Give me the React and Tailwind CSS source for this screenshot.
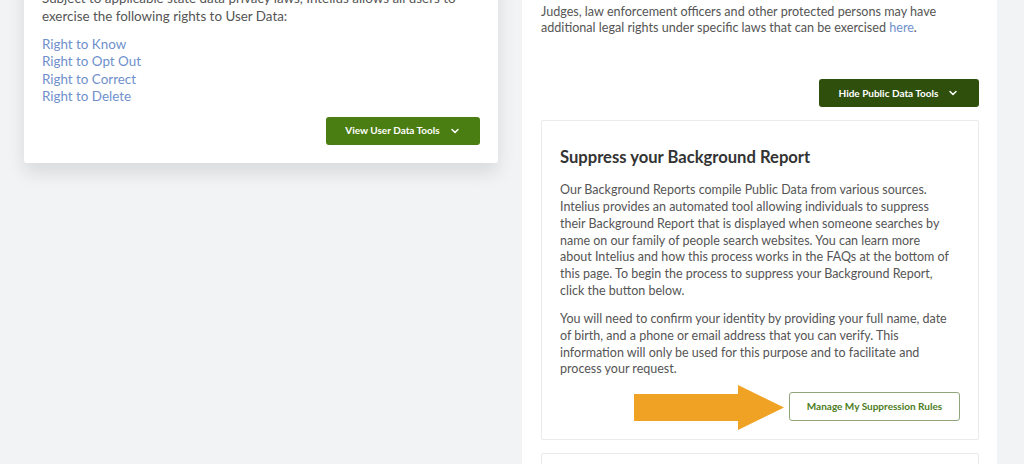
import { ChevronDown } from "lucide-react";

const font = { fontFamily: "Lato, 'Open Sans', sans-serif" };

const Lines = ({ lines }) =>
  lines.map((l, i) => (
    <span key={i} className="block whitespace-nowrap">
      {l}
    </span>
  ));

const App = () => {
  return (
    <div
      className="h-[464px] w-[1024px] overflow-hidden bg-[#f1f3f5] flex items-start text-[#555]"
      style={font}
    >
      {/* left card */}
      <div className="ml-[24px] w-[474px] -mt-[28px] bg-white rounded-b-[3px] shadow-[0_10px_18px_rgba(0,0,0,0.10)] px-[18px] pt-[18px] pb-[18px]">
        <p className="text-[13.4px] leading-[17.5px]">
          Subject to applicable state data privacy laws, Intelius allows all users to exercise
          the following rights to User Data:
        </p>
        <div className="mt-[10.5px] flex flex-col text-[13.4px] leading-[17.5px] text-[#6f90cc]">
          <a>Right to Know</a>
          <a>Right to Opt Out</a>
          <a>Right to Correct</a>
          <a>Right to Delete</a>
        </div>
        <div className="mt-[11px] flex justify-end">
          <button className="w-[154px] h-[28px] rounded-[3px] bg-[#4b7e12] text-white text-[10px] font-bold flex items-center justify-center gap-[9px]">
            View User Data Tools
            <ChevronDown size={12} strokeWidth={3} />
          </button>
        </div>
      </div>

      {/* right card */}
      <div className="ml-[24px] w-[475px] -mt-[20px] h-[520px] bg-white pl-[19px] pr-[18px] pt-[23.5px]">
        <p className="text-[12.6px] leading-[16.7px]">
          <span className="block whitespace-nowrap">
            Judges, law enforcement officers and other protected persons may have
          </span>
          <span className="block whitespace-nowrap">
            additional legal rights under specific laws that can be exercised{" "}
            <a className="text-[#6f90cc]">here</a>.
          </span>
        </p>
        <div className="mt-[42.5px] flex justify-end">
          <button className="w-[160px] h-[28px] rounded-[3px] bg-[#2f4f0c] text-white text-[10px] font-bold flex items-center justify-center gap-[9px]">
            Hide Public Data Tools
            <ChevronDown size={12} strokeWidth={3} />
          </button>
        </div>

        <div className="mt-[13px] border border-[#e9ebed] rounded-[2px] px-[18px] pt-[25px] pb-[18px]">
          <h2 className="text-[16.6px] leading-[22px] font-bold text-[#333]">
            Suppress your Background Report
          </h2>
          <p className="mt-[14px] text-[12.5px] leading-[16.7px]">
            <Lines
              lines={[
                "Our Background Reports compile Public Data from various sources.",
                "Intelius provides an automated tool allowing individuals to suppress",
                "their Background Report that is displayed when someone searches by",
                "name on our family of people search websites. You can learn more",
                "about Intelius and how this process works in the FAQs at the bottom of",
                "this page. To begin the process to suppress your Background Report,",
                "click the button below.",
              ]}
            />
          </p>
          <p className="mt-[12px] text-[12.5px] leading-[16.7px]">
            <Lines
              lines={[
                "You will need to confirm your identity by providing your full name, date",
                "of birth, and a phone or email address that you can verify. This",
                "information will only be used for this purpose and to facilitate and",
                "process your request.",
              ]}
            />
          </p>
          <div className="mt-[14px] flex justify-end relative">
            <svg
              className="absolute left-[74px] top-[-7px]"
              width="152"
              height="46"
              viewBox="0 0 152 46"
            >
              <polygon
                points="0,9 104,9 104,0 150,22.5 104,45 104,36 0,36"
                fill="#f0a224"
              />
            </svg>
            <button className="w-[171px] h-[29px] rounded-[3px] border border-[#8fa57a] bg-white text-[#4d7d24] text-[10px] font-bold">
              Manage My Suppression Rules
            </button>
          </div>
        </div>

        <div className="mt-[13px] h-[60px] border border-[#e9ebed] rounded-[2px]" />
      </div>
    </div>
  );
};

export default App;
